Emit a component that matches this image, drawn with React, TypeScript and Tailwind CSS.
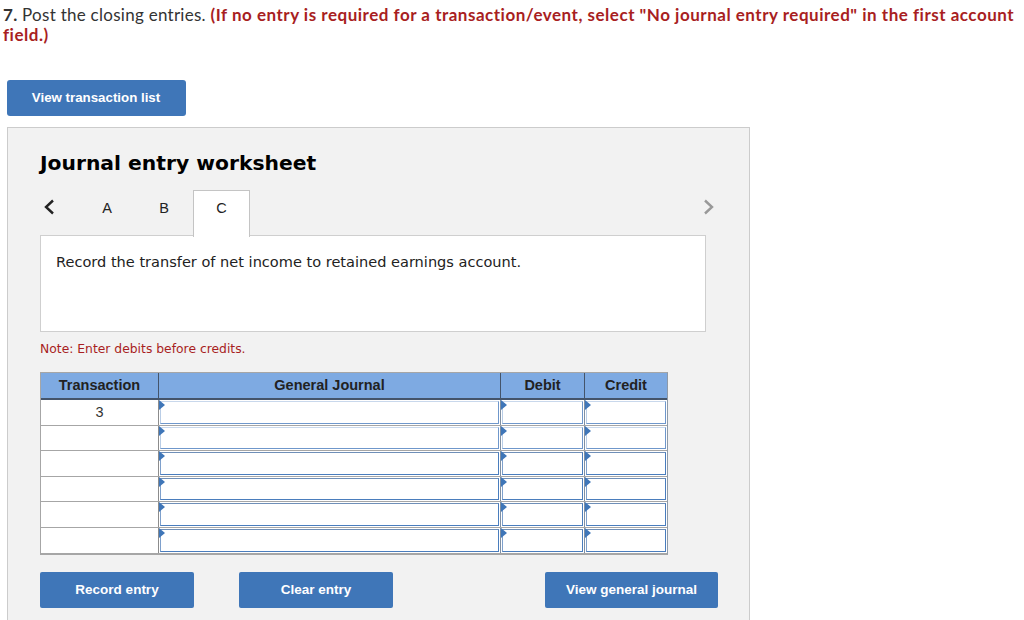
const rows = ["3", "", "", "", "", ""];

function Cell({ last, dark }: { last?: boolean; dark?: boolean }) {
  return (
    <div className={last ? "p-[1px]" : "border-r border-[#7f8fa3] p-[1px]"}>
      <div
        className={
          dark
            ? "relative h-full border-[1.5px] border-[#4a7dbd] border-t-[#6f8fb8] border-l-[#7ea0cc] bg-white"
            : "relative h-full border-[1.5px] border-[#6f97cb] border-l-[#b9cde6] border-t-[#c9d8ec] bg-white"
        }
      >
        <span className="absolute -left-[2px] -top-[2px] h-0 w-0 border-y-[5px] border-l-[6px] border-y-transparent border-l-[#3f76b8]" />
      </div>
    </div>
  );
}

export default function App() {
  return (
    <div className="h-[620px] overflow-hidden bg-white font-['Liberation_Sans',sans-serif]">
      <p className="pl-[3px] pr-1 pt-[5px] font-['Lato',sans-serif] text-[17px] leading-[20px] tracking-[0.27px] text-[#333]">
        <b className="font-bold">7.</b> Post the closing entries.{" "}
        <b className="font-bold tracking-[0.51px] text-[#a81e22]">
          (If no entry is required for a transaction/event, select "No journal entry required" in the first account field.)
        </b>
      </p>

      <button className="ml-[7px] mt-[35px] block h-9 w-[179px] rounded-[3px] bg-[#3f76b8] pr-[1px] text-[13.3px] font-bold text-white">
        View transaction list
      </button>

      <div className="ml-[7px] mt-[11px] h-[520px] w-[743px] border border-[#cccccc] bg-[#f2f2f2] pl-8 pr-11">
        <h1 className="pt-[22px] font-['DejaVu_Sans',sans-serif] text-[20.3px] font-bold leading-[26px] text-black">
          Journal entry worksheet
        </h1>

        <div className="relative mt-[14px] flex h-[45px] w-[675px] text-[14.5px] text-[#222]">
          <svg className="ml-[3px] mt-[9px] h-4 w-3" viewBox="0 0 12 16" fill="none" stroke="#222" strokeWidth="2.4">
            <path d="M10 1.5 3 8l7 6.5" />
          </svg>
          <div className="ml-[45px] mt-[8px] w-[14px] text-center">A</div>
          <div className="ml-[43px] mt-[8px] w-[14px] text-center">B</div>
          <div className="relative z-10 ml-[22px] h-[47px] w-[57px] border-x border-t border-[#c4c4c4] bg-white pt-[7px] text-center">
            C
          </div>
          <svg className="absolute right-0 top-[9px] h-4 w-3" viewBox="0 0 12 16" fill="none" stroke="#999" strokeWidth="2.4">
            <path d="M2 1.5 9 8l-7 6.5" />
          </svg>
        </div>

        <div className="h-[97px] w-[666px] border border-[#cfcfcf] bg-white pl-[15px] pt-4 font-['DejaVu_Sans',sans-serif] text-[14.55px] leading-[20px] text-[#222]">
          Record the transfer of net income to retained earnings account.
        </div>

        <p className="mt-[9px] font-['DejaVu_Sans',sans-serif] text-[12.35px] leading-[16px] text-[#a81e22]">
          Note: Enter debits before credits.
        </p>

        <div className="mt-[15px] w-[628px] border-b-2 border-l border-r border-t border-[#a6a6a6] border-r-[#8e9aa8]">
          <div className="grid h-[27px] grid-cols-[118px_342px_84px_82px] border-b-2 border-[#44546a] bg-[#7eaae2] text-center text-[14.5px] font-bold leading-[24px] text-[#222]">
            <div className="border-r border-[#44546a]">Transaction</div>
            <div className="border-r border-[#44546a]">General Journal</div>
            <div className="border-r border-[#44546a]">Debit</div>
            <div>Credit</div>
          </div>
          {rows.map((value, i) => (
            <div key={i} className="grid h-[25.5px] grid-cols-[118px_342px_84px_82px] border-b border-[#a6a6a6] bg-white last:border-b-0">
              <div className="border-r border-[#8c8c8c] text-center text-[14.5px] leading-[24px] text-[#333]">{value}</div>
              <Cell dark={i >= 2} />
              <Cell dark={i >= 2} />
              <Cell last dark={i >= 2} />
            </div>
          ))}
        </div>

        <div className="mt-[17px] flex w-[678px] text-[13.5px] font-bold text-white">
          <button className="h-9 w-[154px] rounded-[2px] bg-[#3f76b8]">Record entry</button>
          <button className="ml-[45px] h-9 w-[154px] rounded-[2px] bg-[#3f76b8]">Clear entry</button>
          <button className="ml-auto h-9 w-[173px] rounded-[2px] bg-[#3f76b8]">View general journal</button>
        </div>
      </div>
    </div>
  );
}
